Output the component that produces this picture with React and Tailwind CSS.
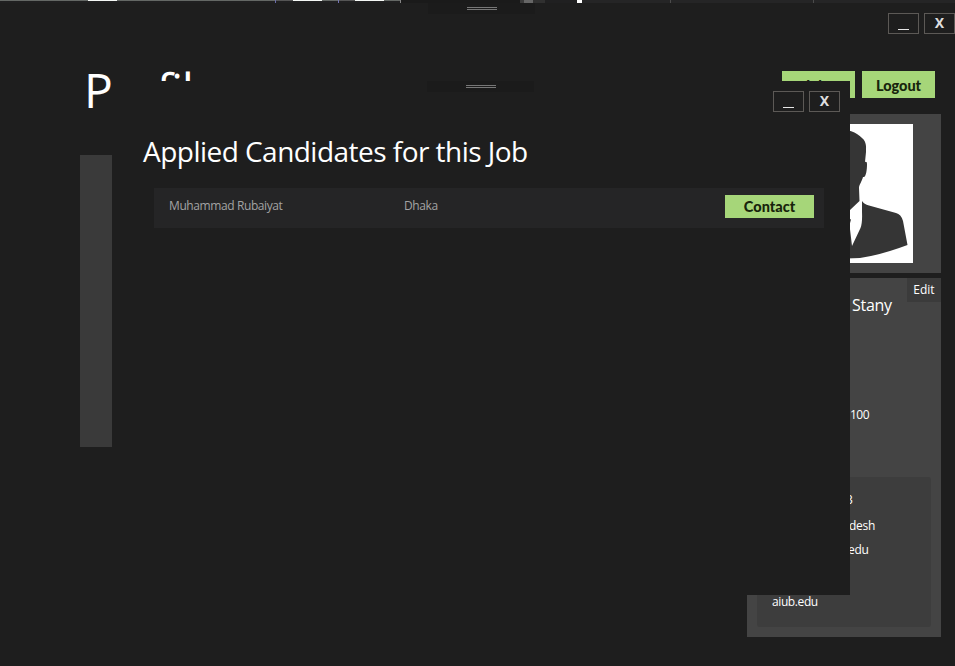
import React from "react";

function WindowButtons() {
  return (
    <div className="flex gap-[5px] font-['Noto_Sans',sans-serif] text-[14px] font-bold text-[#dedede]">
      <div className="flex h-[21px] w-[31px] items-end justify-center border border-[#5c5956] pb-[3px]">
        <span className="h-px w-[11px] bg-[#e6e6e6]" />
      </div>
      <div className="flex h-[21px] w-[31px] items-center justify-center border border-[#5c5956] pb-px leading-none">X</div>
    </div>
  );
}

function Grip() {
  return (
    <div className="flex h-[11px] w-[107px] flex-col items-center justify-center gap-px bg-[#1b1b1b]">
      <span className="h-px w-[30px] bg-[#777]" />
      <span className="h-px w-[30px] bg-[#777]" />
    </div>
  );
}

function TopEdge() {
  return (
    <div className="flex h-[3px] items-start bg-[#202021]">
      <span className="h-px w-[88px] bg-[#646865]" />
      <span className="h-px w-[29px] bg-[#f5f8f5]" />
      <span className="h-px w-[158px] bg-[#646865]" />
      <span className="h-[3px] w-px bg-[#6a6caa]" />
      <span className="h-px w-[17px] bg-[#555]" />
      <span className="h-px w-[29px] bg-[#f5f8f5]" />
      <span className="h-px w-[16px] bg-[#646865]" />
      <span className="h-[3px] w-px bg-[#7475b5]" />
      <span className="h-px w-[16px] bg-[#555]" />
      <span className="h-px w-[29px] bg-[#f5f8f5]" />
      <span className="h-px w-[16px] bg-[#646865]" />
      <span className="h-[3px] w-px bg-[#858585]" />
      <span className="h-[3px] w-[119px] bg-[#1a1a1a]" />
      <span className="h-[3px] w-[4px] bg-[#3b3b3b]" />
      <span className="h-[3px] w-[9px] bg-[#666]" />
      <span className="h-[3px] w-[12px] bg-[#303030]" />
      <span className="h-[3px] w-[32px] bg-[#202021]" />
      <span className="h-[3px] w-[5px] bg-white" />
      <span className="h-[3px] w-[88px] bg-[#252526]" />
      <span className="h-[3px] w-px bg-[#4b4b4b]" />
      <span className="h-[3px] w-[142px] bg-[#252526]" />
      <span className="h-[3px] w-px bg-[#4b4b4b]" />
      <span className="h-[3px] grow bg-[#252526]" />
    </div>
  );
}

function Portrait() {
  return (
    <svg className="h-[139px] w-[137px] bg-white" viewBox="0 0 137 139" fill="#353535">
      <path d="M68 6 C73 6 78 8 81 10 Q84 12 86 14 C91 18 90 24 90 28 L89 38 Q91 37 91 40 C91 46 90 52 88 53 L87 53 C86 57 83 61 83 64 L83.5 77 L74 86 L68 88 L57 78 L54 64 L48 52 L46 40 L47 18 C52 9 60 6 68 6Z" />
      <path d="M86 77 Q88 80 93 81.500 L120 89 Q125 90 127 97 L131.500 121 Q105 131 84 134 L70 134.500 L76 122 L84.500 104 Q86.500 99 86 88Z" />
      <path d="M51 77 L32 83 L13 89 Q8 91 6 98 L2 121 Q28 133 62 134.500 L70 134.500 L50 98Z" />
      <path d="M67 92 L75 95.500 L73.500 101 L76 122 L76 134 L70 134 L62 122 L64 101 L62 95Z" />
    </svg>
  );
}

function Profile() {
  return (
    <div className="flex h-[663px]">
      <main className="w-[747px] pl-[80px] pt-[59px]">
        <h1 className="h-[93px] pl-[4px] font-['Open_Sans','Noto_Sans',sans-serif] text-[48px] leading-[56px] tracking-[-1.6px] text-white">Profile</h1>
        <div className="h-[292px] w-[640px] bg-[#3a3a3a]" />
      </main>
      <aside className="w-[208px] pt-[10px] font-['Open_Sans','Noto_Sans',sans-serif] text-white">
        <div className="flex justify-end">
          <WindowButtons />
        </div>
        <div className="ml-[35px] mt-[37px] flex gap-[7px] font-['Lato',sans-serif] text-[14.5px] font-black text-[#17240c]">
          <div className="flex h-[27px] w-[73px] items-center justify-center bg-[#a6d679] pt-[2px]">Jobs</div>
          <div className="flex h-[27px] w-[73px] items-center justify-center bg-[#a6d679] pt-[2px]">Logout</div>
        </div>
        <div className="mt-[16px] flex h-[159px] w-[194px] justify-center bg-[#444] pt-[10px]">
          <Portrait />
        </div>
        <div className="mt-[5px] flex h-[359px] w-[194px] flex-col bg-[#444]">
          <div className="flex h-[24px] w-[34px] items-center justify-center self-end bg-[#3b3b3b] text-[12px]">Edit</div>
          <div className="-mt-[9px] h-[23px] pl-[105px] text-[16px] leading-[24px] tracking-[-0.3px]">Stany</div>
          <div className="mt-[89px] pl-[103px] text-[12px] leading-[20px] tracking-[-0.5px]">100</div>
          <div className="mx-[10px] mt-[52px] h-[150px] rounded-[3px] bg-[#3d3d3d] text-[12px] leading-[18px]">
            <div className="pl-[89px] pt-[14px]">3</div>
            <div className="pl-[92px] pt-[8px] tracking-[-0.3px]">desh</div>
            <div className="pl-[91px] pt-[6px] tracking-[-0.3px]">edu</div>
            <div className="pl-[15px] pt-[34px] tracking-[-0.4px]">aiub.edu</div>
          </div>
        </div>
      </aside>
    </div>
  );
}

function CandidatesWindow() {
  return (
    <section className="absolute left-[112px] top-[81px] h-[514px] w-[738px] bg-[#1e1e1e]">
      <div className="flex h-[31px] justify-end">
        <div className="mr-[239px]">
          <Grip />
        </div>
        <div className="mr-[10px] pt-[10px]">
          <WindowButtons />
        </div>
      </div>
      <h2 className="mt-[19px] h-[41px] whitespace-nowrap pl-[31px] font-['Open_Sans','Noto_Sans',sans-serif] text-[28px] leading-[40px] tracking-[-0.53px] text-white">
        Applied Candidates for this Job
      </h2>
      <div className="ml-[42px] mt-[16px] flex h-[40px] w-[670px] bg-[#252526] pl-[15px] font-['Open_Sans','Noto_Sans',sans-serif] text-[12px] leading-[36px] text-[#a3a3a3]">
        <span className="w-[235px] tracking-[-0.4px]">Muhammad Rubaiyat</span>
        <span className="w-[321px] tracking-[-0.4px]">Dhaka</span>
        <div className="mt-[7px] flex h-[23px] w-[89px] items-center justify-center bg-[#a6d679] pt-[2px] font-['Lato',sans-serif] text-[14.5px] font-black leading-none text-[#17240c]">
          Contact
        </div>
      </div>
    </section>
  );
}

export default function App() {
  return (
    <div className="relative h-[666px] w-[955px] overflow-hidden bg-[#1e1e1e]">
      <TopEdge />
      <div className="absolute left-[428px] top-[3px]">
        <Grip />
      </div>
      <Profile />
      <CandidatesWindow />
    </div>
  );
}
